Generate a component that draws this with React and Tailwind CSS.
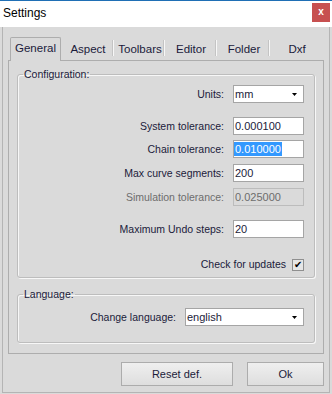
import React from "react";

const lbl = "text-[10.5px] leading-[13px] text-[#1b1b3a] whitespace-nowrap";

function Arrow() {
  return (
    <svg width="5" height="3" viewBox="0 0 5 3" className="block">
      <path d="M0 0H5L2.5 3Z" fill="#000" />
    </svg>
  );
}

function Field({ children, disabled, selected }) {
  return (
    <div
      className={
        disabled
          ? "w-[71px] h-[18px] border border-[#bcbcbc] bg-[#dadada] flex items-center pl-[1px] text-[11px] leading-[13px] text-[#6d6d6d]"
          : "w-[71px] h-[18px] border border-[#a5a5a5] bg-white flex items-center pl-[1px] text-[11px] leading-[13px] text-[#1b1b3a]"
      }
    >
      {selected ? (
        <span className="bg-[#3399ff] text-white px-[1px] -ml-[1px] leading-[14px]">{children}</span>
      ) : (
        children
      )}
    </div>
  );
}

function Row({ label, children, disabled, mt }) {
  return (
    <div className={"flex items-center justify-end " + mt}>
      <span className={disabled ? "text-[10.5px] leading-[13px] text-[#6d6d6d] whitespace-nowrap mr-[9px]" : lbl + " mr-[9px]"}>{label}</span>
      {children}
    </div>
  );
}

function Tab({ children, w }) {
  return (
    <div className={"flex justify-center pt-[5px] text-[11.5px] leading-[14px] text-[#1b1b3a] " + w}>{children}</div>
  );
}

function Sep() {
  return <div className="w-[2px] h-[16px] mt-[3px] border-l border-[#c4c4c4] bg-[#f7f7f7]" />;
}

export default function App() {
  return (
    <div className="w-[332px] h-[394px] bg-[#dadada] flex flex-col font-['Liberation_Sans',Arial,sans-serif] overflow-hidden">
      {/* title bar */}
      <div className="h-[1px] bg-[#1f6fb5]" />
      <div className="h-[26px] bg-white flex items-start justify-between">
        <span className="text-[12px] leading-[16px] text-black ml-[3px] mt-[4px]">Settings</span>
        <div className="w-[18px] h-[19px] mt-[2px] mr-[2px] bg-[#c75050] flex items-center justify-center text-white text-[10px] font-bold leading-none pb-[2px]">
          x
        </div>
      </div>
      {/* body */}
      <div className="flex-1 px-[2px] pb-[1px] flex flex-col">
        <div className="flex-1 border-x border-b border-[#b4b4b4] flex flex-col pl-[5px] pr-[5px] pt-[10px]">
          {/* tabs */}
          <div className="h-[23px] flex items-stretch">
            <div className="ml-[2px] w-[51px] h-[24px] border border-b-0 border-[#adadad] rounded-t-[2px] bg-[#dadada] relative z-10 flex justify-center pt-[3px] text-[11.5px] leading-[14px] text-[#1b1b3a]">
              General
            </div>
            <Tab w="w-[51px] pl-[3px]">Aspect</Tab>
            <Sep />
            <Tab w="w-[49px] pl-[3px]">Toolbars</Tab>
            <Sep />
            <Tab w="w-[50px] pl-[2px]">Editor</Tab>
            <Sep />
            <Tab w="w-[51px] pl-[3px]">Folder</Tab>
            <Sep />
            <Tab w="w-[54px]">Dxf</Tab>
          </div>
          {/* panel */}
          <div className="h-[294px] border border-[#adadad] px-[8px] pt-[7px]">
            <fieldset className="border border-[#bdbdbd] rounded-[3px] shadow-[1px_1px_0_#f7f7f7,inset_1px_1px_0_#f7f7f7]">
              <legend className={lbl + " ml-[5px] px-[1px]"}>Configuration:</legend>
              <div className="pr-[10px] pb-[6px]">
                <Row label="Units:" mt="mt-[4px]">
                  <div className="w-[71px] h-[18px] border border-[#a5a5a5] bg-white flex items-center justify-between pl-[1px] pr-[6px] text-[11px] leading-[13px] text-[#1b1b3a]">
                    <span>mm</span>
                    <Arrow />
                  </div>
                </Row>
                <Row label="System tolerance:" mt="mt-[14px]">
                  <Field>0.000100</Field>
                </Row>
                <Row label="Chain tolerance:" mt="mt-[5px]">
                  <Field selected>0.010000</Field>
                </Row>
                <Row label="Max curve segments:" mt="mt-[6px]">
                  <Field>200</Field>
                </Row>
                <Row label="Simulation tolerance:" mt="mt-[6px]" disabled>
                  <Field disabled>0.025000</Field>
                </Row>
                <Row label="Maximum Undo steps:" mt="mt-[14px]">
                  <Field>20</Field>
                </Row>
                <div className="flex items-center justify-end mt-[20px] h-[13px]">
                  <span className={lbl + " mr-[6px]"}>Check for updates</span>
                  <div className="w-[12px] h-[12px] border border-[#8f8f8f] bg-[#e6e6e6] flex items-center justify-center text-[10px] leading-none text-black">
                    ✔
                  </div>
                </div>
              </div>
            </fieldset>
            <fieldset className="mt-[10px] border border-[#bdbdbd] rounded-[3px] shadow-[1px_1px_0_#f7f7f7,inset_1px_1px_0_#f7f7f7]">
              <legend className={lbl + " ml-[5px] px-[1px]"}>Language:</legend>
              <div className="pr-[10px] pb-[16px]">
                <div className="flex items-center justify-end mt-[7px]">
                  <span className={lbl + " mr-[9px]"}>Change language:</span>
                  <div className="w-[119px] h-[18px] border border-[#a5a5a5] bg-white flex items-center justify-between pl-[1px] pr-[6px] text-[11px] leading-[13px] text-[#1b1b3a]">
                    <span>english</span>
                    <Arrow />
                  </div>
                </div>
              </div>
            </fieldset>
          </div>
          {/* buttons */}
          <div className="flex justify-end gap-[14px] mt-[8px]">
            <button className="w-[112px] h-[24px] border border-[#acacac] bg-gradient-to-b from-[#efefef] to-[#dedede] text-[11px] text-[#1b1b3a]">
              Reset def.
            </button>
            <button className="w-[77px] h-[24px] border border-[#acacac] bg-gradient-to-b from-[#efefef] to-[#dedede] text-[11px] text-[#1b1b3a]">
              Ok
            </button>
          </div>
        </div>
      </div>
    </div>
  );
}
